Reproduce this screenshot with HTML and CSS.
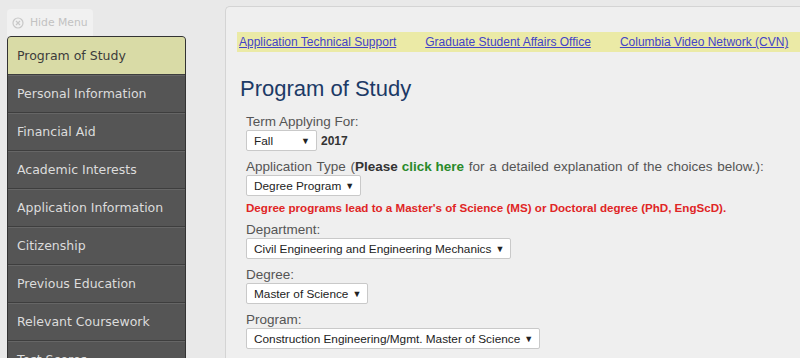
FILE: index.html
```html
<!DOCTYPE html>
<html lang="en">
<head>
    <meta charset="UTF-8">
    <meta name="viewport" content="width=device-width, initial-scale=1.0">
    <title>Program of Study</title>
    <link rel="stylesheet" href="styles.css">
</head>
<body>
    <div class="page">
        <!-- Side menu -->
        <div class="side">
            <div class="hide-tab">
                <svg class="hide-icon" width="12" height="12" viewBox="0 0 12 12">
                    <circle cx="6" cy="6" r="5" fill="none" stroke="#c8c8c8" stroke-width="1.2"/>
                    <path d="M4 4 L8 8 M8 4 L4 8" stroke="#c8c8c8" stroke-width="1.2"/>
                </svg>
                Hide Menu
            </div>
            <ul class="menu">
                <li class="active">Program of Study</li>
                <li>Personal Information</li>
                <li>Financial Aid</li>
                <li>Academic Interests</li>
                <li>Application Information</li>
                <li>Citizenship</li>
                <li>Previous Education</li>
                <li>Relevant Coursework</li>
                <li>Test Scores</li>
            </ul>
        </div>

        <!-- Main panel -->
        <div class="main">
            <div class="links">
                <a href="#">Application Technical Support</a>
                <a href="#">Graduate Student Affairs Office</a>
                <a href="#">Columbia Video Network (CVN)</a>
            </div>

            <h1>Program of Study</h1>

            <div class="field">
                <label>Term Applying For:</label>
                <div class="row">
                    <span class="select w-term">Fall</span>
                    <b class="year">2017</b>
                </div>
            </div>

            <div class="field">
                <label class="wide">Application Type (<b>Please <a class="green" href="#">click here</a></b> for a detailed explanation of the choices below.):</label>
                <div class="row">
                    <span class="select">Degree Program</span>
                </div>
                <p class="note">Degree programs lead to a Master's of Science (MS) or Doctoral degree (PhD, EngScD).</p>
            </div>

            <div class="field">
                <label>Department:</label>
                <div class="row">
                    <span class="select">Civil Engineering and Engineering Mechanics</span>
                </div>
            </div>

            <div class="field">
                <label>Degree:</label>
                <div class="row">
                    <span class="select">Master of Science</span>
                </div>
            </div>

            <div class="field">
                <label>Program:</label>
                <div class="row">
                    <span class="select">Construction Engineering/Mgmt. Master of Science</span>
                </div>
            </div>
        </div>
    </div>
</body>
</html>
```

FILE: styles.css
```css
* {
    padding: 0px;
    margin: 0px;
    box-sizing: border-box;
}
body {
    background-color: #e9e9e9;
    font-family: "Liberation Sans", Arial, sans-serif;
    overflow: hidden;
}
.page {
    display: flex;
    align-items: flex-start;
    padding: 6px 0px 0px 7px;
}

/* SIDE MENU */
.side {
    width: 179px;
    flex-shrink: 0;
}
.hide-tab {
    display: flex;
    align-items: center;
    gap: 6px;
    height: 27px;
    margin-top: 3px;
    padding: 0px 4px 0px 5px;
    width: 86px;
    white-space: nowrap;
    background-color: #f1f1f1;
    border-radius: 4px 4px 0px 0px;
    color: #c2c2c2;
    font-family: "DejaVu Sans", Verdana, sans-serif;
    font-size: 10.8px;
}
.menu {
    list-style: none;
    background-color: #555555;
    border: 1px solid #333333;
    border-radius: 4px 4px 0px 0px;
    overflow: hidden;
}
.menu li {
    height: 38px;
    line-height: 37px;
    padding-left: 9px;
    color: #dcdcdc;
    font-family: "DejaVu Sans", Verdana, sans-serif;
    font-size: 12.5px;
    border-bottom: 1px solid #3e3e3e;
    box-shadow: inset 0px 1px 0px #666666;
}
.menu li.active {
    background-color: #d9dba6;
    color: #3c3c3c;
    box-shadow: none;
}

/* MAIN PANEL */
.main {
    margin-left: 39px;
    flex: 1;
    min-height: 400px;
    background-color: #efefef;
    border: 1px solid #d4d4d4;
    border-right: none;
    border-radius: 5px 0px 0px 0px;
    padding: 25px 0px 0px 11px;
}
.links {
    display: flex;
    gap: 29px;
    height: 20px;
    align-items: center;
    padding-left: 2px;
    background-color: #ebeaa6;
    font-size: 12px;
}
.links a {
    color: #4343c8;
}
h1 {
    font-weight: normal;
    font-size: 22px;
    color: #1c3a66;
    margin: 24px 0px 10px 3px;
}
.field {
    padding-left: 9px;
    margin-bottom: 6px;
}
.field label {
    display: block;
    padding-top: 2px;
    font-size: 13.5px;
    color: #555555;
    line-height: 16px;
}
.field label.wide {
    word-spacing: 1px;
}
.field label b {
    color: #333333;
    word-spacing: 0px;
}
.green {
    color: #2a8a2a;
    text-decoration: none;
}
.row {
    display: flex;
    align-items: center;
    gap: 4px;
}
.select {
    display: inline-flex;
    align-items: center;
    height: 21px;
    padding: 0px 6px 0px 7px;
    background-color: #ffffff;
    border: 1px solid #c9c9c9;
    border-radius: 2px;
    font-size: 11.8px;
    color: #222222;
}
.select::after {
    content: "\25BC";
    font-size: 9px;
    margin-left: 4px;
}
.w-term {
    width: 71px;
    justify-content: space-between;
}
.year {
    font-size: 12px;
    color: #333333;
}
.note {
    color: #e02525;
    font-weight: bold;
    font-size: 11.6px;
    margin-top: 5px;
}
```
